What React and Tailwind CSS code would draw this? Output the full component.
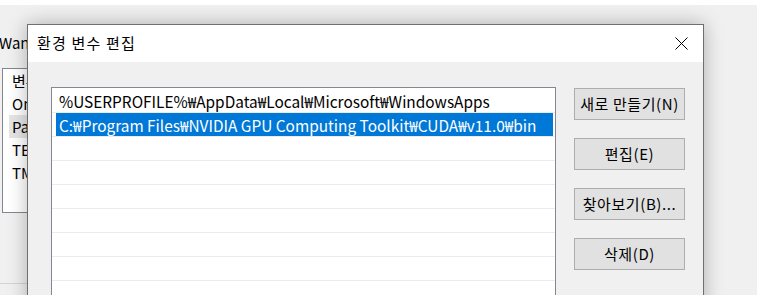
import React from 'react';

const FONT = { fontFamily: '"Noto Sans CJK KR", "Noto Sans", sans-serif' };

const paths = [
  '%USERPROFILE%₩AppData₩Local₩Microsoft₩WindowsApps',
  'C:₩Program Files₩NVIDIA GPU Computing Toolkit₩CUDA₩v11.0₩bin',
];

const buttons = ['새로 만들기(N)', '편집(E)', '찾아보기(B)...', '삭제(D)'];

const CloseIcon = () => (
  <svg width="13" height="13" viewBox="0 0 13 13" className="text-black">
    <path d="M0.5 0.5L12.5 12.5M12.5 0.5L0.5 12.5" stroke="currentColor" strokeWidth="1" />
  </svg>
);

// window behind the dialog, only its left edge shows
const BackgroundWindow = () => (
  <div className="absolute left-0 top-[5px] w-[27px] h-[290px] overflow-hidden">
    <div className="absolute left-[-1px] top-[28px] text-[15px] leading-[20px] text-black whitespace-nowrap">Wanda</div>
    <div className="absolute left-[2px] top-[63px] w-[200px] h-[145px] border border-[#828790] bg-white text-[15px] leading-[23px] text-black whitespace-nowrap">
      <div className="pl-[9px]">변수</div>
      <div className="pl-[9px]">OneDrive</div>
      <div className="ml-[6px] pl-[3px] bg-[#e5e5e5]">Path</div>
      <div className="pl-[9px]">TEMP</div>
      <div className="pl-[9px]">TMP</div>
    </div>
    <div className="absolute left-0 top-[278px] w-[60px] h-px bg-[#d4d4d4]" />
  </div>
);

const Dialog = () => (
  <div className="absolute left-[27px] top-[24px] w-[677px] h-[300px] border border-[#6f6f6f] bg-[#f0f0f0] shadow-[0_0_18px_rgba(0,0,0,0.28)] flex flex-col">
    <div className="h-[37px] shrink-0 bg-white flex items-center justify-between pl-[9px] pr-[15px]">
      <span className="text-[15px] text-black tracking-[1.2px]">환경 변수 편집</span>
      <CloseIcon />
    </div>
    <div className="flex shrink-0 pl-[23px] pt-[25px] gap-[18px]">
      <div className="w-[505px] h-[240px] border border-[#828790] bg-white pt-px">
        {Array.from({ length: 9 }).map((_, i) => (
          <div key={i} className="h-[24px] border-b border-[#ebebeb] flex">
            {i === 1 ? (
              <div className="ml-[4px] mr-[2px] flex-1 bg-[#0078d7] text-white text-[15.4px] leading-[24px] pl-[3px] whitespace-nowrap">
                {paths[i]}
              </div>
            ) : (
              <div className="pl-[7px] text-[15.4px] leading-[24px] text-black whitespace-nowrap">
                {paths[i] || ''}
              </div>
            )}
          </div>
        ))}
      </div>
      <div className="flex flex-col gap-[18px] pt-px">
        {buttons.map((b) => (
          <div
            key={b}
            className="w-[111px] h-[32px] border border-[#adadad] bg-[#e1e1e1] flex items-center justify-center text-[15px] tracking-[0.6px] text-black whitespace-nowrap"
          >
            {b}
          </div>
        ))}
      </div>
    </div>
  </div>
);

export default function App() {
  return (
    <div className="relative w-[757px] h-[295px] overflow-hidden bg-[#f0f0f0]" style={FONT}>
      <div className="h-[5px] bg-white" />
      <BackgroundWindow />
      <Dialog />
    </div>
  );
}
